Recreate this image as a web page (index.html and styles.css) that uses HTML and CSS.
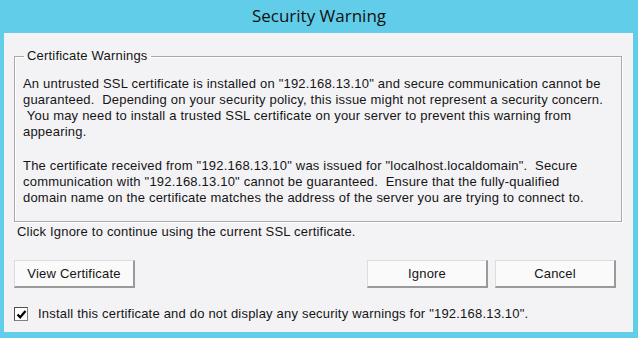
FILE: index.html
```html
<!DOCTYPE html>
<html lang="en">
<head>
    <meta charset="UTF-8">
    <title>Security Warning</title>
    <link rel="stylesheet" href="styles.css">
</head>
<body>
    <div class="window">
        <div class="titlebar">Security Warning</div>
        <div class="client">
            <fieldset class="group">
                <legend>Certificate Warnings</legend>
                <p class="first">An untrusted SSL certificate is installed on "192.168.13.10" and secure communication cannot be guaranteed.&nbsp; Depending on your security policy, this issue might not represent a security concern.<br>&nbsp;You may need to install a trusted SSL certificate on your server to prevent this warning from appearing.</p>
                <p class="second">The certificate received from "192.168.13.10" was issued for "localhost.localdomain".&nbsp; Secure communication with "192.168.13.10" cannot be guaranteed.&nbsp; Ensure that the fully-qualified<br>domain name on the certificate matches the address of the server you are trying to connect to.</p>
            </fieldset>
            <div class="hint">Click Ignore to continue using the current SSL certificate.</div>
            <div class="buttons">
                <button class="btn">View Certificate</button>
                <span class="spacer"></span>
                <button class="btn">Ignore</button>
                <button class="btn">Cancel</button>
            </div>
            <label class="check">
                <span class="box">
                    <svg width="11" height="11" viewBox="0 0 11 11"><path d="M1.5 5.5 L4.2 8.3 L9.5 2" fill="none" stroke="#000" stroke-width="2.2"/></svg>
                </span>
                Install this certificate and do not display any security warnings for "192.168.13.10".
            </label>
        </div>
    </div>
</body>
</html>
```

FILE: styles.css
```css
body {
    margin: 0;
    background: #62cde9;
    font-family: "Liberation Sans", Arial, sans-serif;
    font-size: 13px;
    letter-spacing: 0.2px;
    color: #151515;
}
.window {
    width: 638px;
    height: 338px;
    display: flex;
    flex-direction: column;
}
.titlebar {
    height: 33px;
    line-height: 32px;
    text-align: center;
    font-family: "Open Sans", "Noto Sans", sans-serif;
    font-size: 17px;
    letter-spacing: 0;
    color: #111;
}
.client {
    margin: 0 5px 6px 4px;
    flex: 1;
    background: #f3f3f5;
    padding: 15px 11px 0 10px;
}
.group {
    margin: 0;
    padding: 0 12px 15px 8px;
    border: 1px solid #a9a9a9;
    box-shadow: 1px 1px 0 #fff, inset 1px 1px 0 #fff;
}
.group legend {
    margin-left: 1px;
    padding: 0 3px;
    line-height: 16px;
}
.group p {
    margin: 0;
    line-height: 16px;
}
.group .first {
    margin-top: 12px;
}
.group .second {
    margin-top: 18px;
}
.hint {
    margin: 2px 0 0 3px;
    line-height: 16px;
}
.buttons {
    display: flex;
    gap: 7px;
    margin-top: 20px;
    padding-right: 6px;
}
.spacer {
    flex: 1;
}
.btn {
    width: 121px;
    height: 28px;
    font: inherit;
    letter-spacing: 0.2px;
    color: #151515;
    background: #fafafa;
    border: 1px solid #dcdcdc;
    border-right: 2px solid #9a9a9a;
    border-bottom: 2px solid #9a9a9a;
    padding: 0;
}
.check {
    display: flex;
    align-items: center;
    gap: 10px;
    margin-top: 18px;
    line-height: 16px;
}
.box {
    width: 12px;
    height: 12px;
    border: 1px solid #808080;
    border-top-color: #505050;
    border-left-color: #505050;
    background: #fff;
    display: flex;
    align-items: center;
    justify-content: center;
}
```
